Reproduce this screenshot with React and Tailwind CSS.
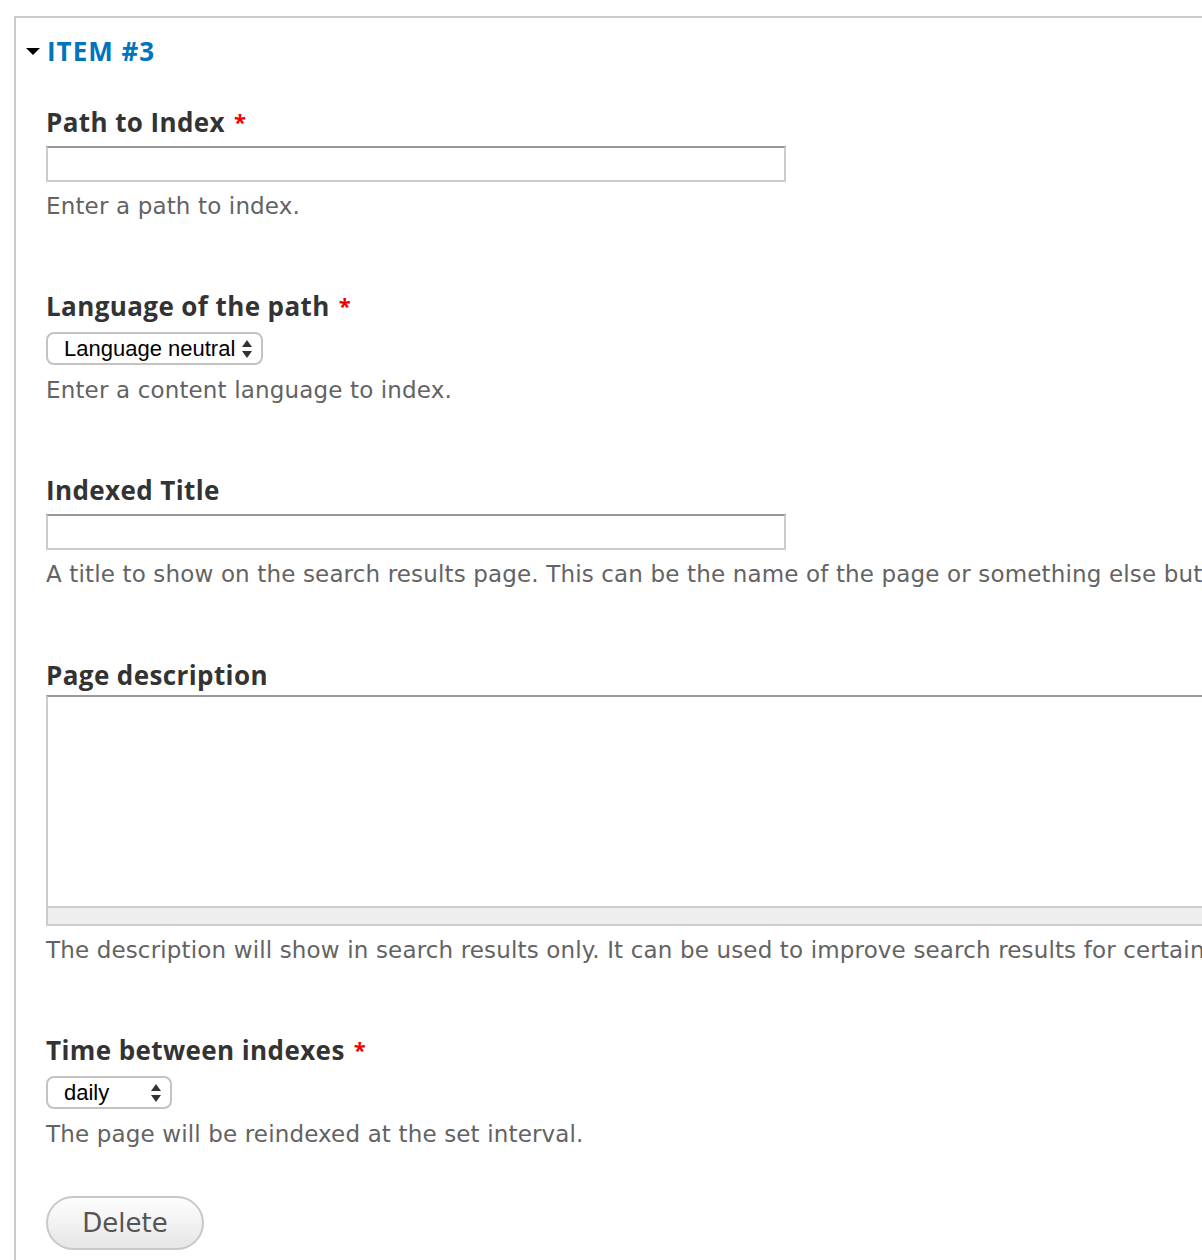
const sans = { fontFamily: '"Open Sans", "Liberation Sans", sans-serif' };
const desc = { fontFamily: '"DejaVu Sans", "Open Sans", sans-serif' };

function Label({ children, required }) {
  return (
    <div
      className="text-[26px] leading-[32px] font-bold text-[#333] tracking-[0.4px]"
      style={sans}
    >
      {children}
      {required && (
        <span className="text-[#e00] ml-[9px] text-[22px] align-top relative top-[-1px]">*</span>
      )}
    </div>
  );
}

function Description({ children, className = "" }) {
  return (
    <div
      className={
        "text-[23px] leading-[30px] text-[#636363] whitespace-nowrap tracking-[0.15px] " + className
      }
      style={desc}
    >
      {children}
    </div>
  );
}

function TextInput() {
  return (
    <div className="w-[740px] h-[36px] border-2 border-[#ccc] border-t-[#999] bg-white" />
  );
}

function Select({ value, width }) {
  return (
    <div
      className={
        "h-[33px] border-2 border-[#c3c3c3] rounded-[8px] bg-white flex items-center justify-between pl-[16px] pr-[8px] " +
        width
      }
    >
      <span
        className="text-[22px] leading-none text-black"
        style={{ fontFamily: '"Liberation Sans", Arial, sans-serif' }}
      >
        {value}
      </span>
      <svg width="12" height="20" viewBox="0 0 12 20">
        <polygon points="6,1 11,8 1,8" fill="#333" />
        <polygon points="1,12 11,12 6,19" fill="#333" />
      </svg>
    </div>
  );
}

export default function App() {
  return (
    <div className="w-[1202px] h-[1260px] overflow-hidden bg-white">
      <div className="ml-[14px] mt-[16px] w-[1500px] border-l-2 border-t-2 border-[#ccc] pt-[17px] pb-[40px]">
        <div className="flex items-center pl-[10px]">
          <svg width="14" height="8" viewBox="0 0 14 8" className="mr-[7px] mt-[2px]">
            <polygon points="0,0 14,0 7,7" fill="#000" />
          </svg>
          <span
            className="text-[26px] leading-[32px] font-bold text-[#0074bd] tracking-[1px]"
            style={sans}
          >
            ITEM #3
          </span>
        </div>

        <div className="pl-[30px]">
          <div className="mt-[39px]">
            <Label required>Path to Index</Label>
            <div className="mt-[8px]">
              <TextInput />
            </div>
            <Description className="mt-[9px]">Enter a path to index.</Description>
          </div>

          <div className="mt-[69px]">
            <Label required>Language of the path</Label>
            <div className="mt-[10px]">
              <Select value="Language neutral" width="w-[217px]" />
            </div>
            <Description className="mt-[10px]">Enter a content language to index.</Description>
          </div>

          <div className="mt-[69px]">
            <Label>Indexed Title</Label>
            <div className="mt-[8px]">
              <TextInput />
            </div>
            <Description className="mt-[9px]">
              A title to show on the search results page. This can be the name of the page or
              something else but it should be meaningful to users.
            </Description>
          </div>

          <div className="mt-[70px]">
            <Label>Page description</Label>
            <div className="mt-[4px] w-[1400px]">
              <div className="h-[211px] border-2 border-[#ccc] border-t-[#999] border-b-0 bg-white" />
              <div className="h-[20px] border-2 border-[#ccc] bg-[#eee]" />
            </div>
            <Description className="mt-[9px]">
              The description will show in search results only. It can be used to improve search
              results for certain keywords.
            </Description>
          </div>

          <div className="mt-[69px]">
            <Label required>Time between indexes</Label>
            <div className="mt-[10px]">
              <Select value="daily" width="w-[126px]" />
            </div>
            <Description className="mt-[10px]">The page will be reindexed at the set interval.</Description>
          </div>

          <button
            className="mt-[47px] w-[158px] h-[54px] rounded-full border-2 border-[#c8c8c8] bg-gradient-to-b from-[#fefefe] to-[#e6e6e6] text-[26px] text-[#555]"
            style={{ fontFamily: '"DejaVu Sans", "Liberation Sans", sans-serif' }}
          >
            Delete
          </button>
        </div>
      </div>
    </div>
  );
}
